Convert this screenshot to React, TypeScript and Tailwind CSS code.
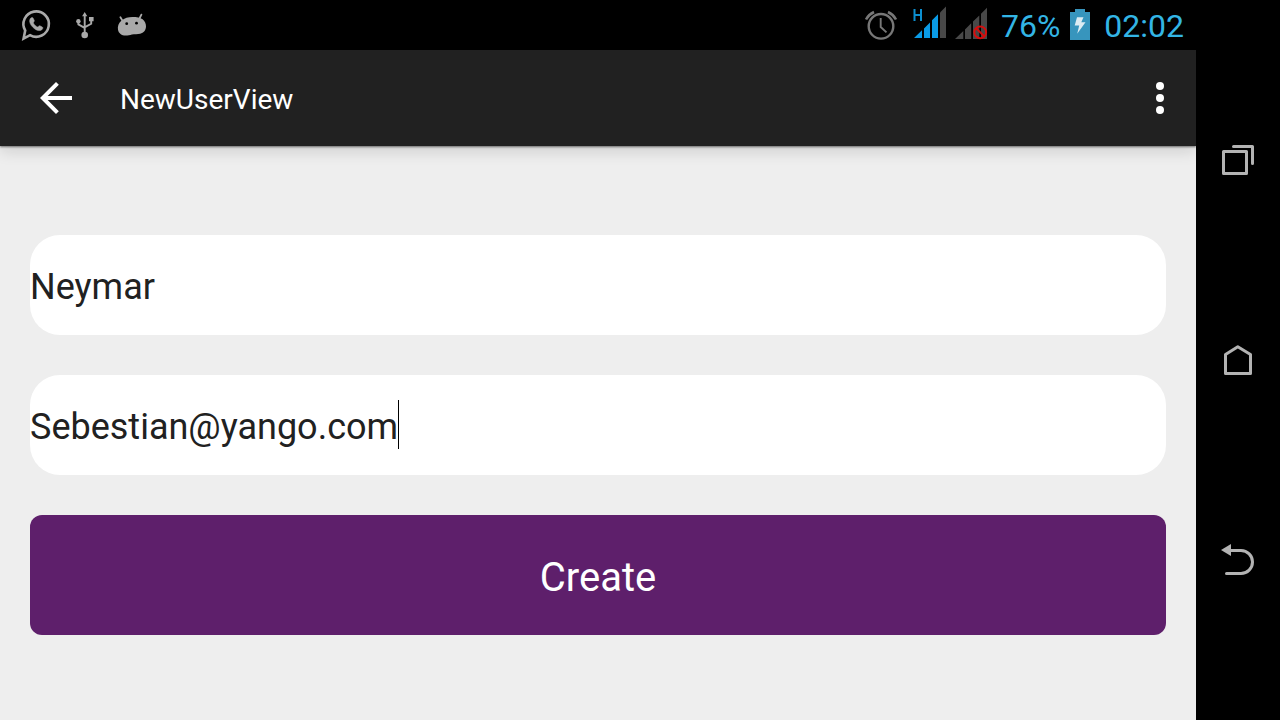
import { useState } from "react";

function WhatsAppIcon() {
  return (
    <svg className="h-[50px] w-9" viewBox="20 0 36 50" fill="none" aria-hidden="true">
      <path
        d="M25.2 30.5A12.7 12.7 0 1 1 30 35.200L23.600 38.600Z"
        stroke="#a9a9a9"
        strokeWidth="2.6"
        strokeLinejoin="miter"
      />
      <path
        d="M30.8 18c1-.9 2-.7 2.400.2l1.100 2.300c.3.8-1.100 1.900-.9 2.500.7 1.600 2.200 3 3.900 3.900.8.3 1.700-1.500 2.500-1.200l2.500 1.300c1 .6.5 2-.5 2.800-2 1.500-4.600.8-7-.9-2.700-1.900-4.700-4.500-5.100-7.100-.2-1.500.2-2.900 1.100-3.800z"
        fill="#a9a9a9"
        stroke="#a9a9a9"
        strokeWidth="0.500"
      />
    </svg>
  );
}

function UsbIcon() {
  return (
    <svg className="h-[50px] w-5" viewBox="76 0 20 50" fill="none" aria-hidden="true">
      <path
        d="M84.700 15v20M78.400 21v3.400l6.200 3.400M91.200 20v3.800L85 27.200"
        stroke="#a9a9a9"
        strokeWidth="1.900"
      />
      <path d="M84.700 12l2.600 4.200h-5.200zM89 17h4.600v4.200H89z" fill="#a9a9a9" />
      <circle cx="78.400" cy="21.300" r="2.200" fill="#a9a9a9" />
      <circle cx="84.700" cy="35" r="3.300" fill="#a9a9a9" />
    </svg>
  );
}

function AndroidIcon() {
  return (
    <svg className="h-[50px] w-8" viewBox="116 0 32 50" aria-hidden="true">
      <path d="M120.400 17.300l2.600 4.200M141.400 14.600l-2.200 4.400" stroke="#a9a9a9" strokeWidth="1.800" strokeLinecap="round" />
      <path
        d="M121.500 20.500c3-2.400 6.800-3.500 11-3.500 4.300 0 7.600.5 10.100 2.200 2.200 1.600 3.500 4.400 3.400 7.300-.1 3.500-2.300 6.500-5.800 7.200-2.700.6-5.500.2-8.300.7-2.100.5-3.900 1.200-6.300 1.200-4 0-7-2.300-7.600-5.800-.6-3.400.6-7.100 3.500-9.300z"
        fill="#a9a9a9"
      />
      <circle cx="126.700" cy="23.700" r="1.400" fill="#000" />
      <circle cx="136.500" cy="23.200" r="1.400" fill="#000" />
    </svg>
  );
}

function AlarmIcon() {
  return (
    <svg className="h-[50px] w-10" viewBox="863 0 40 50" fill="none" stroke="#777" aria-hidden="true">
      <circle cx="881" cy="26.300" r="12.300" strokeWidth="2.400" />
      <path d="M880.700 18v9l5.800 5.400" strokeWidth="1.900" />
      <path d="M866 19.500a17 17 0 0 1 8-7.500M888 12a17 17 0 0 1 8 7.500" strokeWidth="2.600" />
    </svg>
  );
}

function DataSignalIcon() {
  return (
    <svg className="h-[50px] w-9" viewBox="911 0 36 50" aria-hidden="true">
      <path d="M914.500 9v12M921 9v12M914.500 15H921" stroke="#0c8fd0" strokeWidth="2" fill="none" />
      <path d="M914 38l8-7.800V38zM924 28.400l6-6V38h-6zM932 20.200l6-5.900V38h-6z" fill="#0a9be6" />
      <path d="M940 12.400l6-5.800V38h-6z" fill="#484848" />
    </svg>
  );
}

function BlockedSignalIcon() {
  return (
    <svg className="h-[50px] w-[38px]" viewBox="955 0 38 50" aria-hidden="true">
      <path d="M955 39l8.300-8V39zM965 29.500l6.200-6.200V39H965zM973 21.600l6.300-6.200V39H973zM981 13.700l6-6V39h-6z" fill="#484848" />
      <g fill="none" stroke="#d80c0c" strokeWidth="2">
        <circle cx="980.200" cy="32.300" r="5.900" />
        <path d="M976 28.100l8.400 8.400" />
      </g>
    </svg>
  );
}

function BatteryIcon() {
  return (
    <svg className="h-[50px] w-7" viewBox="1068 0 28 50" aria-hidden="true">
      <path d="M1075 9h10v3h5v28h-20V12h5z" fill="#3795bd" />
      <path d="M1077 17.300h6.500l-2.200 5h4.200l-8.300 11.500 2-8.300h-4.500z" fill="#dcecf3" />
    </svg>
  );
}

function StatusBar() {
  return (
    <div className="flex h-[50px] items-center justify-between bg-black pl-5 pr-3">
      <div className="flex gap-5">
        <WhatsAppIcon />
        <UsbIcon />
        <AndroidIcon />
      </div>
      <div className="flex items-center gap-2 text-[32px] leading-[48px] text-[#33b5e5]">
        <AlarmIcon />
        <DataSignalIcon />
        <BlockedSignalIcon />
        <span className="pt-0.5">76%</span>
        <BatteryIcon />
        <span className="pt-0.5">02:02</span>
      </div>
    </div>
  );
}

function AppBar() {
  return (
    <header className="z-10 flex h-24 items-center justify-between bg-[#212121] pl-8 pr-3 text-white shadow-[0_1px_2px_rgba(0,0,0,0.5),0_6px_14px_rgba(0,0,0,0.12)]">
      <div className="flex items-center gap-10">
        <button type="button" aria-label="Back">
          <svg className="size-12" viewBox="0 0 24 24" fill="currentColor">
            <path d="M20 11H7.830l5.590-5.590L12 4l-8 8 8 8 1.410-1.410L7.830 13H20v-2z" />
          </svg>
        </button>
        <h1 className="pt-1 text-[28px] leading-9">NewUserView</h1>
      </div>
      <button type="button" aria-label="More options">
        <svg className="size-12" viewBox="0 0 24 24" fill="currentColor">
          <circle cx="12" cy="6" r="2" />
          <circle cx="12" cy="12" r="2" />
          <circle cx="12" cy="18" r="2" />
        </svg>
      </button>
    </header>
  );
}

const fieldClass =
  "block h-[100px] w-full rounded-[30px] bg-white pt-1 text-[36px] text-[#212121] outline-none";

function NewUserForm() {
  const [name, setName] = useState("Neymar");
  const [email, setEmail] = useState("Sebestian@yango.com");

  return (
    <form
      className="flex flex-1 flex-col gap-10 px-[30px] pt-[89px]"
      onSubmit={(event) => event.preventDefault()}
    >
      <input
        className={fieldClass}
        type="text"
        aria-label="Name"
        value={name}
        onChange={(event) => setName(event.target.value)}
      />
      <div className="relative">
        <input
          className={fieldClass}
          type="text"
          inputMode="email"
          aria-label="Email"
          value={email}
          onChange={(event) => setEmail(event.target.value)}
        />
        <span className="absolute left-[368px] top-[25px] h-[49px] w-px bg-black" />
      </div>
      <button
        type="submit"
        className="h-[120px] rounded-xl bg-[#5e1f6b] pt-1.5 text-[40px] text-white"
      >
        Create
      </button>
    </form>
  );
}

function SystemNav() {
  return (
    <nav className="flex w-[84px] shrink-0 flex-col bg-black py-[60px]" aria-label="System">
      <button type="button" aria-label="Recent apps" className="flex flex-1 items-center">
        <svg className="h-[60px] w-[84px]" viewBox="0 0 84 60" fill="none" stroke="#b3b3b3" strokeWidth="3" strokeLinejoin="round" strokeLinecap="round">
          <path d="M27.500 21.500h23v22h-23zM37.500 16.500h19v17" />
        </svg>
      </button>
      <button type="button" aria-label="Home" className="flex flex-1 items-center">
        <svg className="h-[60px] w-[84px]" viewBox="0 0 84 60" fill="none" stroke="#b3b3b3" strokeWidth="3" strokeLinejoin="round">
          <path d="M29.500 43.500v-19L41.800 16.800l12.700 7.700v19z" />
        </svg>
      </button>
      <button type="button" aria-label="Back" className="flex flex-1 items-center">
        <svg className="h-[60px] w-[84px]" viewBox="0 0 84 60" fill="none">
          <path d="M33 20.500h12a11.500 11.500 0 0 1 0 23H30.500" stroke="#b3b3b3" strokeWidth="3" strokeLinecap="round" />
          <path d="M25 20l10-6v12z" fill="#b3b3b3" />
        </svg>
      </button>
    </nav>
  );
}

export default function App() {
  return (
    <div className="flex min-h-screen font-['Roboto',sans-serif]">
      <div className="flex min-w-0 flex-1 flex-col bg-[#eeeeee]">
        <StatusBar />
        <AppBar />
        <NewUserForm />
      </div>
      <SystemNav />
    </div>
  );
}
